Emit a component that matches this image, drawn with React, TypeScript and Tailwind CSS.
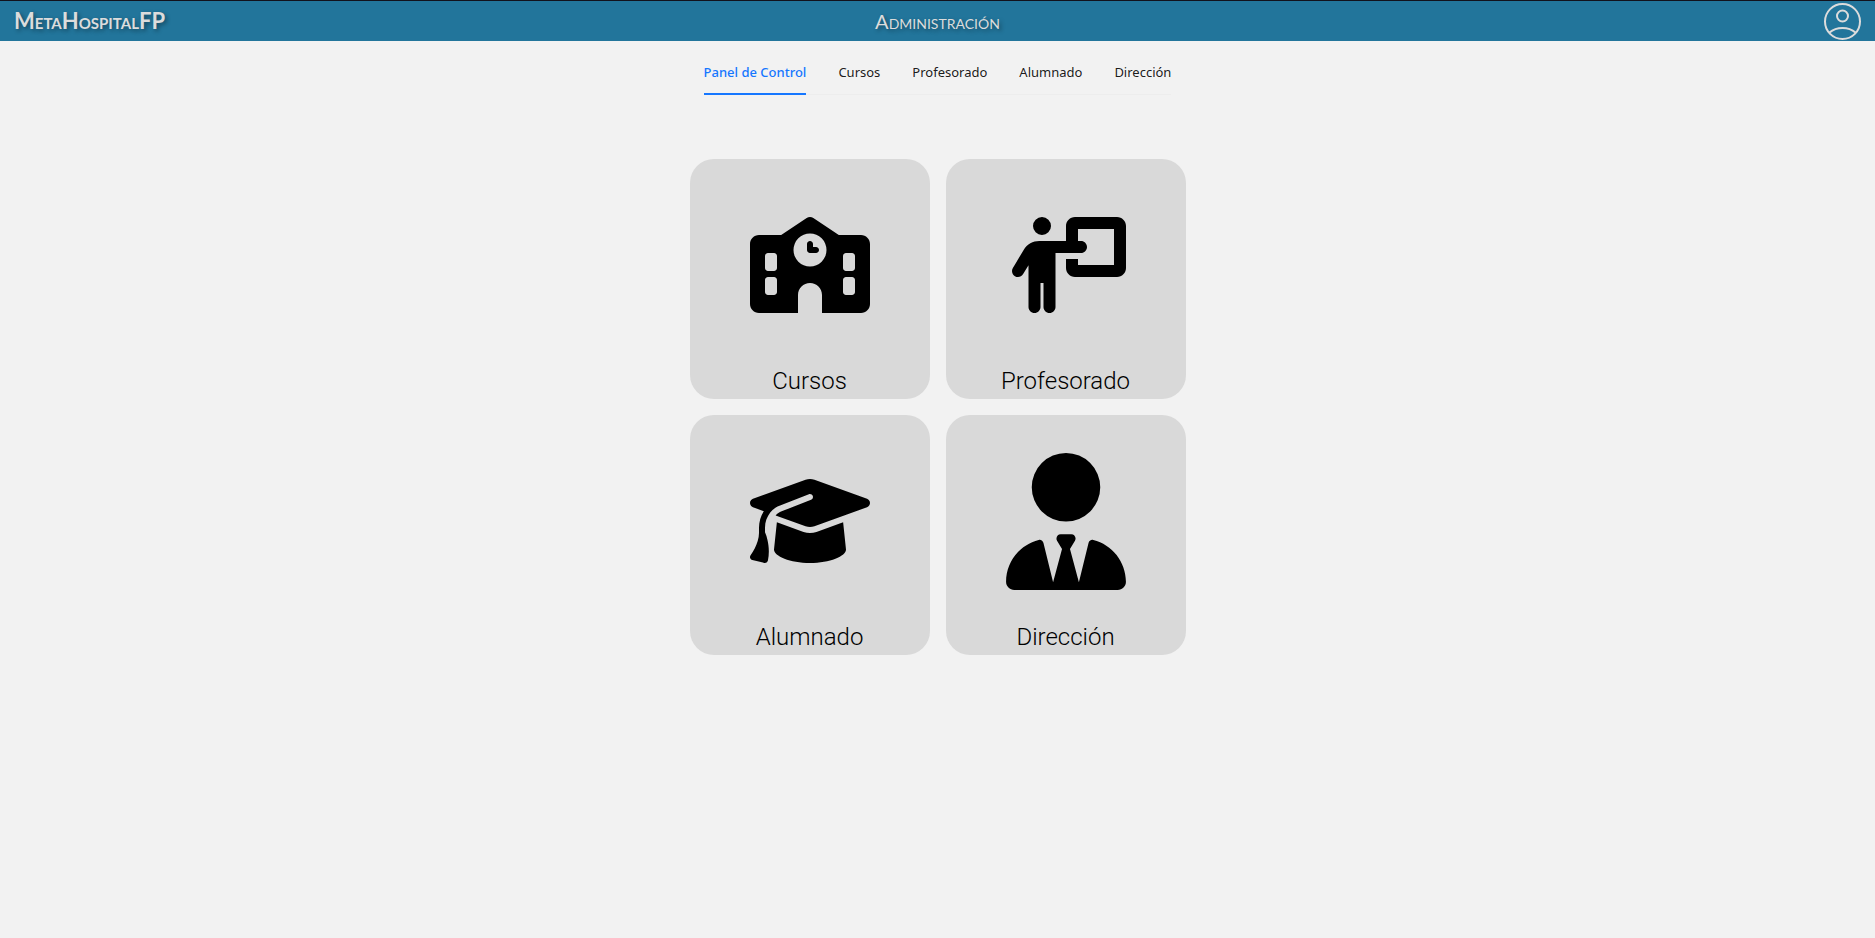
import { FaGraduationCap, FaPersonChalkboard, FaSchool, FaUserTie } from "react-icons/fa6";
import type { IconType } from "react-icons";

const tabs = ["Panel de Control", "Cursos", "Profesorado", "Alumnado", "Dirección"];

const cards: { label: string; icon: IconType; iconClass: string }[] = [
  { label: "Cursos", icon: FaSchool, iconClass: "h-24 w-[120px]" },
  { label: "Profesorado", icon: FaPersonChalkboard, iconClass: "h-24 w-[120px]" },
  { label: "Alumnado", icon: FaGraduationCap, iconClass: "h-24 w-[120px]" },
  { label: "Dirección", icon: FaUserTie, iconClass: "h-[137px] w-[120px]" },
];

function Header() {
  return (
    <header className="grid h-[41px] grid-cols-3 items-center border-t border-[#12121c] bg-[#22759b] px-3.5 font-['Lato','Open_Sans',sans-serif] text-[#dcdcdc] [font-variant-caps:small-caps] [text-shadow:2px_2px_4px_rgba(0,0,0,0.4)]">
      <a href="#inicio" className="justify-self-start text-[22px] leading-10 font-bold">
        MetaHospitalFP
      </a>
      <h1 className="justify-self-center text-xl leading-10">Administración</h1>
      <button type="button" aria-label="Perfil" className="justify-self-end">
        <svg viewBox="0 0 38 38" className="block size-[38px]" fill="none" stroke="currentColor" strokeWidth="2">
          <circle cx="19.500" cy="19.500" r="17.500" />
          <circle cx="19.500" cy="14" r="5.500" />
          <path d="M6.500 30.500 C10 27.500 14.500 26 19.500 26 S29 27.500 32.500 30.500" />
        </svg>
      </button>
    </header>
  );
}

function Tabs() {
  return (
    <nav className="mx-auto mt-4 flex w-fit gap-8 font-['Noto_Sans',sans-serif] text-[13px] text-black/90 shadow-[inset_0_-1px_0_#ededed]">
      {tabs.map((tab, i) => (
        <a
          key={tab}
          href="#"
          aria-current={i === 0 ? "page" : undefined}
          className={
            i === 0
              ? "border-b-2 border-[#1677ff] pt-[5px] pb-[11px] leading-5 font-medium text-[#1677ff]"
              : "border-b-2 border-transparent pt-[5px] pb-[11px] leading-5"
          }
        >
          {tab}
        </a>
      ))}
    </nav>
  );
}

export default function App() {
  return (
    <div className="min-h-screen bg-[#f2f2f2]">
      <Header />
      <Tabs />
      <main className="mx-auto mt-16 grid w-fit grid-cols-2 gap-4">
        {cards.map(({ label, icon: Icon, iconClass }) => (
          <button
            key={label}
            type="button"
            className="flex size-60 flex-col items-center justify-start rounded-3xl bg-[#d9d9d9] font-['Roboto',sans-serif] text-2xl font-light text-black"
          >
            <span className="flex h-[212px] items-center">
              <Icon className={iconClass} />
            </span>
            <span className="leading-5">{label}</span>
          </button>
        ))}
      </main>
    </div>
  );
}
